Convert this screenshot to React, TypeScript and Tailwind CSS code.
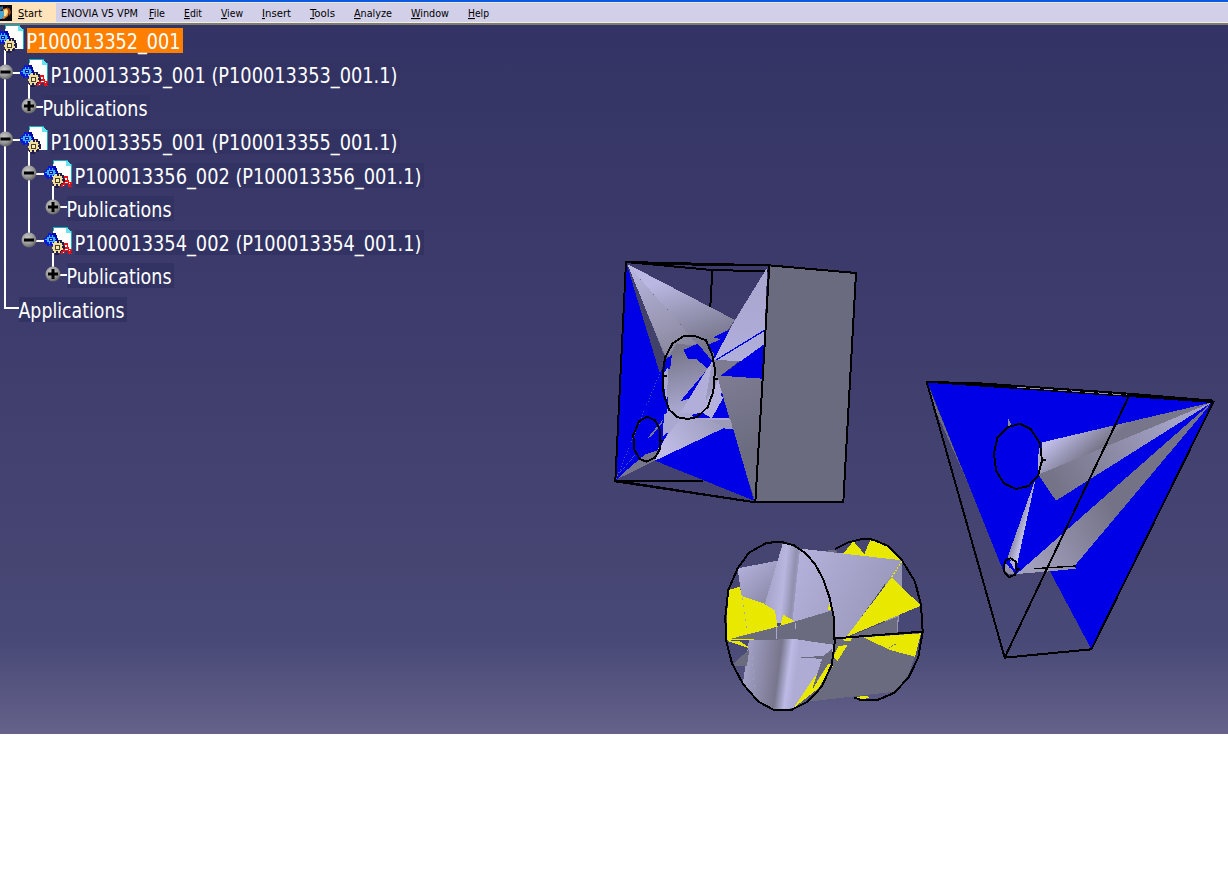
import React from "react";

const menus: { label: string; cell: string; width: number }[] = [
  { label: "File", cell: "w-[35px]", width: 16 },
  { label: "Edit", cell: "w-[37px]", width: 18 },
  { label: "View", cell: "w-[41px]", width: 22 },
  { label: "Insert", cell: "w-12", width: 29 },
  { label: "Tools", cell: "w-11", width: 25 },
  { label: "Analyze", cell: "w-[57px]", width: 38 },
  { label: "Window", cell: "w-[57px]", width: 38 },
  { label: "Help", cell: "w-10", width: 21 },
];

function Mnemonic({ text, width }: { text: string; width: number }) {
  return (
    <svg width={width} height={18} className="block shrink-0 overflow-visible" fill="#000">
      <text x="0" y="13" fontSize="11" textLength={width} lengthAdjust="spacingAndGlyphs">
        <tspan textDecoration="underline">{text[0]}</tspan>
        {text.slice(1)}
      </text>
    </svg>
  );
}

function MenuBar() {
  return (
    <header className="flex h-[25px] flex-col bg-[#d2d0e8]">
      <div className="h-[2px] shrink-0 bg-[#0a5be2]" />
      <nav className="flex h-5 shrink-0 items-center border-t border-[#ece9d8]">
        <div className="flex h-full w-14 items-center bg-[#ffe3ba]">
          <svg width="13" height="17" viewBox="0 0 13 17" className="shrink-0">
            <rect width="12" height="16" y="1" fill="#080814" />
            <path d="M0 3l3-1v3L0 7z" fill="#2d5f94" />
            <path d="M3 5l4-1 2 3-1 5-4 3-3-1z" fill="#e08028" />
            <path d="M4 6l3-1 1 3-2 4-2 0z" fill="#ffdf90" />
            <path d="M0 7l4 0v5l-2 3H0z" fill="#49a5cf" />
            <path d="M7 3l3 2 1 4-2 3-1-5z" fill="#9c4718" />
          </svg>
          <div className="ml-[5px]">
            <Mnemonic text="Start" width={24} />
          </div>
        </div>
        <svg width="77" height="18" className="ml-[5px] mr-[11px] block shrink-0 overflow-visible">
          <text x="0" y="13" fontSize="11" textLength="77" lengthAdjust="spacingAndGlyphs">ENOVIA V5 VPM</text>
        </svg>
        {menus.map((m) => (
          <div key={m.label} className={m.cell + " shrink-0"}>
            <Mnemonic text={m.label} width={m.width} />
          </div>
        ))}
      </nav>
      <div className="h-px shrink-0 bg-[#f2efe0]" />
      <div className="h-[2px] shrink-0 bg-[#7d7a70]" />
    </header>
  );
}

function BlueGear() {
  return (
    <g>
      <path d="M4 6h3v1h2V6h3v2h1v3h1v4h-2v2h-2v2H7v-1H5v1H3v-2H1v-2H0v-4h2V9h2z" fill="#0618e0" />
      <path d="M8 6h4v2h1v3h1v4h-2v2h-1v-3h1v-4h-2V8H8z" fill="#0306a8" />
      <path d="M3 10h2V8h1v2h2V8h1v2h2v2h1v1h-1v2H9v2H8v-2H6v2H5v-2H3v-2H1v-1h2z" fill="#38b4ff" />
      <rect x="5" y="11" width="4" height="3" fill="#0614b8" />
      <rect x="6" y="12" width="2" height="1" fill="#8adcff" />
    </g>
  );
}

function YellowGear() {
  return (
    <g>
      <path d="M14 13h4v2h2v3h1v5h-2v3h-4v2h-4v-2H9v-3h2v-8h3z" fill="#211c4c" />
      <path d="M11 14h2v2h2v-2h1v2h2v2h1v1h-1v2h1v2h-2v1h-1v2h-2v-2h-2v2h-2v-2h-1v-2H8v-2h1v-3H8v-1h2v-1h1z" fill="#f0de98" />
      <rect x="11" y="18" width="5" height="5" fill="#4b4030" />
      <rect x="12" y="19" width="3" height="3" fill="#f8ebae" />
    </g>
  );
}

function ProductIcon({ part }: { part: boolean }) {
  return (
    <svg width="28" height="28" viewBox="0 0 28 28" shapeRendering="crispEdges" className="shrink-0">
      <path d="M9 1h13l5 5v18H9z" fill="#fff" />
      <path d="M9 4V0.500h14v4h4v19" fill="none" stroke="#12aebc" />
      <path d="M22 1h1l4 4v1h-5z" fill="#67e3ed" />
      <BlueGear />
      <YellowGear />
      {part && <path d="M20 16h4v4h1v2h3v2h-1v2h1v1h-4v-3h-3v2h-2v1h-2v-3h2v-2h2v-3h-1z" fill="#ee1018" />}
      {part && <path d="M21 18h2v2h-2zM21 22h3v1h-3zM19 25h1v1h-1zM25 23h1v1h-1z" fill="#fff" />}
    </svg>
  );
}

type Row = {
  text: string;
  pad: string;
  width: number;
  kind: "root" | "part" | "product" | "leaf";
};

const rows: Row[] = [
  { text: "P100013352_001", pad: "-ml-[4px]", width: 154, kind: "root" },
  { text: "P100013353_001 (P100013353_001.1)", pad: "ml-5", width: 347, kind: "part" },
  { text: "Publications", pad: "ml-[43px]", width: 105, kind: "leaf" },
  { text: "P100013355_001 (P100013355_001.1)", pad: "ml-5", width: 347, kind: "product" },
  { text: "P100013356_002 (P100013356_001.1)", pad: "ml-11", width: 347, kind: "part" },
  { text: "Publications", pad: "ml-[67px]", width: 105, kind: "leaf" },
  { text: "P100013354_002 (P100013354_001.1)", pad: "ml-11", width: 347, kind: "part" },
  { text: "Publications", pad: "ml-[67px]", width: 105, kind: "leaf" },
  { text: "Applications", pad: "ml-[19px]", width: 106, kind: "leaf" },
];

function Label({ row }: { row: Row }) {
  return (
    <div className={row.kind === "root" ? "bg-[#ff8000] pr-[2px]" : "bg-[#333363] pr-[2px]"}>
      <svg width={row.width} height="25" className="block overflow-visible" fill="#fff">
        <text x="-0.5" y="20.8" fontSize="20.5" textLength={row.width} lengthAdjust="spacingAndGlyphs">
          {row.text}
        </text>
      </svg>
    </div>
  );
}

function Knob({ x, y, plus }: { x: number; y: number; plus?: boolean }) {
  return (
    <g>
      <circle cx={x} cy={y} r="7.500" fill="url(#knob)" />
      <path d={`M${x - 5} ${y}h10` + (plus ? `M${x} ${y - 5}v10` : "")} stroke="#000" strokeWidth="3" />
    </g>
  );
}

function Connectors() {
  return (
    <svg width="80" height="300" viewBox="0 25 80 300" className="absolute left-0 top-0">
      <defs>
        <radialGradient id="knob" cx="0.4" cy="0.35" r="0.75">
          <stop offset="0" stopColor="#c8c8c8" />
          <stop offset="0.55" stopColor="#989898" />
          <stop offset="1" stopColor="#505050" />
        </radialGradient>
      </defs>
      <path
        d="M5 50V308H19M5 73H20M29 84V107H43M5 140H20M29 151V241H44M29 174H44M53 186V207H67M53 253V275H67"
        fill="none"
        stroke="#fff"
        strokeWidth="2"
        shapeRendering="crispEdges"
      />
      <Knob x={5.5} y={72} />
      <Knob x={29} y={106} plus />
      <Knob x={5.5} y={139} />
      <Knob x={29} y={173} />
      <Knob x={53} y={207} plus />
      <Knob x={29} y={240} />
      <Knob x={53} y={274} plus />
    </svg>
  );
}

function Tree() {
  return (
    <div className="relative w-[440px]">
      <Connectors />
      <div className="relative flex flex-col">
        {rows.map((r, i) => (
          <div key={i} className={"flex h-[33.65px] shrink-0 items-start " + r.pad}>
            {r.kind !== "leaf" && <ProductIcon part={r.kind === "part"} />}
            <div className={r.kind === "leaf" ? "mt-[3px]" : "ml-[3px] mt-[3px]"}>
              <Label row={r} />
            </div>
          </div>
        ))}
      </div>
    </div>
  );
}

function Shade({ id, from, to, p }: { id: string; from: string; to: string; p: number[] }) {
  return (
    <linearGradient id={id} gradientUnits="userSpaceOnUse" x1={p[0]} y1={p[1]} x2={p[2]} y2={p[3]}>
      <stop offset="0" stopColor={from} />
      <stop offset="1" stopColor={to} />
    </linearGradient>
  );
}

const BLUE = "#0000e6";
const GRAY = "#6b6b80";
const YELLOW = "#e8e800";

function Block() {
  return (
    <g transform="translate(600 250) scale(0.33333)">
      <defs>
        <Shade id="b1" from="#bab8e2" to="#747387" p={[200, 90, 270, 310]} />
        <Shade id="b2" from="#a9a7cf" to="#b0aedb" p={[450, 100, 400, 330]} />
        <Shade id="b3" from="#77768a" to="#aaa8d0" p={[230, 300, 260, 480]} />
        <Shade id="b4" from="#bfbce8" to="#9997b5" p={[190, 600, 370, 480]} />
        <Shade id="b5" from="#7c7b91" to="#6c6c81" p={[360, 400, 450, 600]} />
        <Shade id="b6" from="#b9b7e0" to="#8b899f" p={[90, 50, 205, 310]} />
      </defs>
      <path d="M78 36L335 60L505 64M337 60L331 170M46 692H310" fill="none" stroke="#000" strokeWidth="6" />
      <path d="M508 48L770 68L730 755L466 757z" fill={GRAY} />
      <path d="M80 42L46 690L165 630L462 752L380 510L195 330L180 370z" fill={BLUE} />
      <path d="M80 42L198 320L180 372z" fill="#42416a" />
      <path d="M82 42L405 210L380 245L340 335L195 320z" fill="url(#b1)" />
      <path d="M82 42L290 280L198 320z" fill="url(#b6)" />
      <path d="M502 52L490 330L335 335L405 210z" fill="url(#b2)" />
      <path d="M390 238L340 262L362 268L322 285L342 312L340 332z" fill={BLUE} />
      <path d="M345 332L492 242" stroke={BLUE} strokeWidth="4" />
      <path d="M340 330L418 333L362 377L486 384L466 755L345 390z" fill="url(#b5)" />
      <path d="M362 377L492 283L486 386z" fill={BLUE} />
      <path d="M190 350L230 280L300 290L337 335L355 390L398 540L370 535L165 632L190 570L205 460z" fill="url(#b3)" />
      <path d="M250 300L293 281L338 335L322 355L290 328H264z" fill={BLUE} />
      <path d="M200 325L216 315L210 358L202 355L200 378L188 362z" fill={BLUE} />
      <path d="M205 350L200 465L188 375z" fill="#aaa8cc" />
      <path d="M336 335L240 490L305 487L355 390z" fill="#b1afd9" />
      <path d="M336 338L316 455L355 390z" fill="#9d9bbd" />
      <path d="M318 362L240 455L267 446z" fill={BLUE} />
      <path d="M355 388L305 487L335 503L370 445z" fill="#b4b2dc" />
      <path d="M305 487L335 505L370 443L388 504H285L275 495z" fill={BLUE} />
      <path d="M362 430L368 431L370 441L362 438z" fill={BLUE} />
      <path d="M240 507L370 510L393 512L398 536L370 535L165 632L190 540z" fill="url(#b4)" />
      <path d="M208 480L192 495L187 575L240 510z" fill="#aaa8d0" />
      <path d="M335 509H392L398 538L375 537z" fill="#9c9ab9" />
      <path d="M183 530L189 520V558L206 545L180 594z" fill={BLUE} />
      <path d="M165 632L370 535L400 538L462 752z" fill={BLUE} />
      <path d="M46 690L134 614L175 600L165 632z" fill="#77768a" />
      <path d="M48 688L130 605" stroke={BLUE} strokeWidth="7" />
      <path d="M140 567L188 510L186 520L155 558z" fill="#77768e" />
      <path d="M82 42L290 280" stroke="#504e70" strokeWidth="2" strokeDasharray="2 28" />
      <path d="M48 688L178 373" stroke="#77778e" strokeWidth="2" strokeDasharray="3 7" />
      <path d="M48 680L110 610" stroke="#77778e" strokeWidth="2" strokeDasharray="10 5" />
      <path
        d="M508 46L78 36L46 692L466 757L508 46L768 69L730 755H466M130 42L508 46M46 694L466 757M252 258L282 257L318 271L337 315L345 360L340 425L323 471L292 501L264 507L233 502L208 480L191 433L188 378L195 323L218 280zM345 388H355M190 378H200M141 500L165 511L180 540L181 595L165 623L139 635L119 627L103 599L100 555L117 514zM181 573H190"
        fill="none"
        stroke="#000"
        strokeWidth="6"
      />
    </g>
  );
}

function Wedge() {
  return (
    <g transform="translate(910 370) scale(0.33333)">
      <defs>
        <Shade id="w1" from="#c0bde9" to="#77768a" p={[430, 205, 500, 290]} />
        <Shade id="w2" from="#747387" to="#a3a1c4" p={[430, 340, 780, 150]} />
        <Shade id="w3" from="#a19fbc" to="#737286" p={[360, 580, 620, 430]} />
        <Shade id="w4" from="#747386" to="#bfbce5" p={[310, 460, 345, 470]} />
      </defs>
      <path d="M52 36L910 96L544 838L420 604L320 612L278 598z" fill={BLUE} />
      <path d="M52 40L165 320L80 130z" fill={GRAY} />
      <path d="M396 217L906 97L385 314V252L396 250z" fill="url(#w1)" />
      <path d="M385 314L906 97L438 392z" fill="url(#w2)" />
      <path d="M320 612L906 97L492 590L498 596L420 604z" fill="url(#w3)" />
      <path d="M378 322L322 580L310 610L282 598L297 550z" fill="url(#w4)" />
      <path d="M295 146L304 166L295 170z" fill="#8a88a2" />
      <path d="M387 225H394V280L384 314z" fill="#aaa8cb" />
      <path d="M285 577L313 610L318 592L298 567z" fill={BLUE} />
      <path d="M298 572L316 580V602z" fill="#b0aed4" />
      <path d="M285 602L301 592L316 612L294 612z" fill="#8f8da7" />
      <path
        d="M48 35L910 96L544 838L284 863L50 35L180 40L656 74L910 96M50 36L220 43M656 80L284 863M330 161L362 177L390 220L396 272L384 317L356 348L318 357L282 340L258 302L252 250L262 204L292 172zM396 270H407M302 565L317 575L320 602L314 615L297 621L284 609L281 589L288 570zM320 597H330"
        fill="none"
        stroke="#000"
        strokeWidth="6"
      />
      <path d="M180 38L656 71L910 92" fill="none" stroke="#000" strokeWidth="6" />
      <path d="M320 51L650 75" fill="none" stroke="#9391ad" strokeWidth="3" strokeDasharray="28 13" />
      <path d="M372 596L497 588" stroke="#000" strokeWidth="4" />
    </g>
  );
}

function Cylinder() {
  return (
    <g transform="translate(715 530) scale(0.33333)">
      <defs>
        <Shade id="c1" from="#b2b0d9" to="#9c9abd" p={[260, 100, 490, 220]} />
        <Shade id="c2" from="#b0aed8" to="#8c8aa8" p={[85, 110, 170, 210]} />
        <linearGradient id="c3" gradientUnits="userSpaceOnUse" x1="165" y1="160" x2="265" y2="170">
          <stop offset="0" stopColor="#a8a6cc" />
          <stop offset="0.4" stopColor="#b9b7e0" />
          <stop offset="0.7" stopColor="#918fae" />
          <stop offset="0.85" stopColor="#a8a6cd" />
          <stop offset="1" stopColor="#afadd6" />
        </linearGradient>
        <linearGradient id="c4" gradientUnits="userSpaceOnUse" x1="90" y1="400" x2="245" y2="420">
          <stop offset="0" stopColor="#a3a1c6" />
          <stop offset="0.35" stopColor="#8c8aa8" />
          <stop offset="0.65" stopColor="#77768d" />
          <stop offset="0.85" stopColor="#bdbbe5" />
          <stop offset="1" stopColor="#aeacd5" />
        </linearGradient>
      </defs>
      <path d="M385 71L415 33L448 72L466 29L520 48L560 91z" fill={YELLOW} />
      <path d="M320 66L345 60H364L366 72z" fill={GRAY} />
      <path d="M560 92L561 155L548 305H510V145z" fill="#9694b3" />
      <path d="M204 38L250 55L560 91L396 322L350 335L240 330L150 220z" fill="url(#c1)" />
      <path d="M68 115L188 92L180 210L153 225L80 202z" fill="url(#c2)" />
      <path d="M204 38L255 58L232 280H186L150 220z" fill="url(#c3)" />
      <path d="M40 180L75 170L80 198L145 220L180 242L188 290L95 330L33 330z" fill={YELLOW} />
      <path d="M204 254L240 274L196 287z" fill={YELLOW} />
      <path d="M530 142L618 227L394 321z" fill={YELLOW} />
      <path d="M548 260L546 308L405 319z" fill={GRAY} />
      <path d="M360 325L620 305L600 380L580 435L540 485L280 515L340 420z" fill={GRAY} />
      <path d="M445 322L618 310L600 380L525 360z" fill={YELLOW} />
      <path d="M382 326L410 323L408 334L388 332zM370 348L398 345L368 392L354 382z" fill={YELLOW} />
      <path d="M102 328H245L360 345L350 405L235 535L176 538L130 515L84 460z" fill="url(#c4)" />
      <path d="M33 330L188 290L355 240L360 345L245 328z" fill={GRAY} />
      <path d="M185 290V328M242 280V297" stroke="#aaa8d0" strokeWidth="4" />
      <path d="M103 358L54 402L62 407H96zM252 382L325 378L350 358V405L315 400L322 387z" fill={GRAY} />
      <path d="M33 330L118 328M40 332L100 352L75 336z" fill={YELLOW} stroke={YELLOW} strokeWidth="3" />
      <path d="M340 402L356 405L310 475L235 535L306 430L294 475z" fill={YELLOW} />
      <path d="M318 398L292 475L340 402z" fill={GRAY} />
      <path d="M346 214L354 240H338zM416 502L455 497L462 503L435 510z" fill={YELLOW} />
      <path d="M560 93L530 142" stroke={YELLOW} strokeWidth="4" strokeDasharray="6 4" />
      <path d="M82 205L98 310M108 340L118 475" stroke="#a3a1bf" strokeWidth="3" strokeDasharray="6 15" />
      <path d="M521 353L545 341" stroke={GRAY} strokeWidth="3" strokeDasharray="5 4" />
      <path
        d="M204 37L237 46L272 70L300 102L325 148L344 204L356 260L359 340L350 405L320 470L278 515L229 540L175 539L130 515L84 462L51 400L33 330L31 260L40 180L68 115L102 68L152 40L180 36zM360 57L400 37L445 26L474 29L519 48L561 91L600 155L618 225L623 305L610 382L582 440L539 488L490 509L435 509L416 502M360 325L623 305"
        fill="none"
        stroke="#000"
        strokeWidth="6"
      />
    </g>
  );
}

export default function App() {
  return (
    <div className="flex min-h-[883px] w-[1228px] flex-col overflow-hidden bg-white font-['DejaVu_Sans_Condensed','DejaVu_Sans',sans-serif]">
      <MenuBar />
      <main className="relative h-[709px] shrink-0 overflow-hidden bg-[linear-gradient(to_bottom,#333365_0%,#3e3c6c_42%,#464572_75%,#494977_87%,#64628a_100%)]">
        <svg
          width="1228"
          height="709"
          viewBox="0 25 1228 709"
          shapeRendering="crispEdges"
          className="absolute left-0 top-0"
        >
          <Block />
          <Wedge />
          <Cylinder />
        </svg>
        <Tree />
      </main>
    </div>
  );
}
